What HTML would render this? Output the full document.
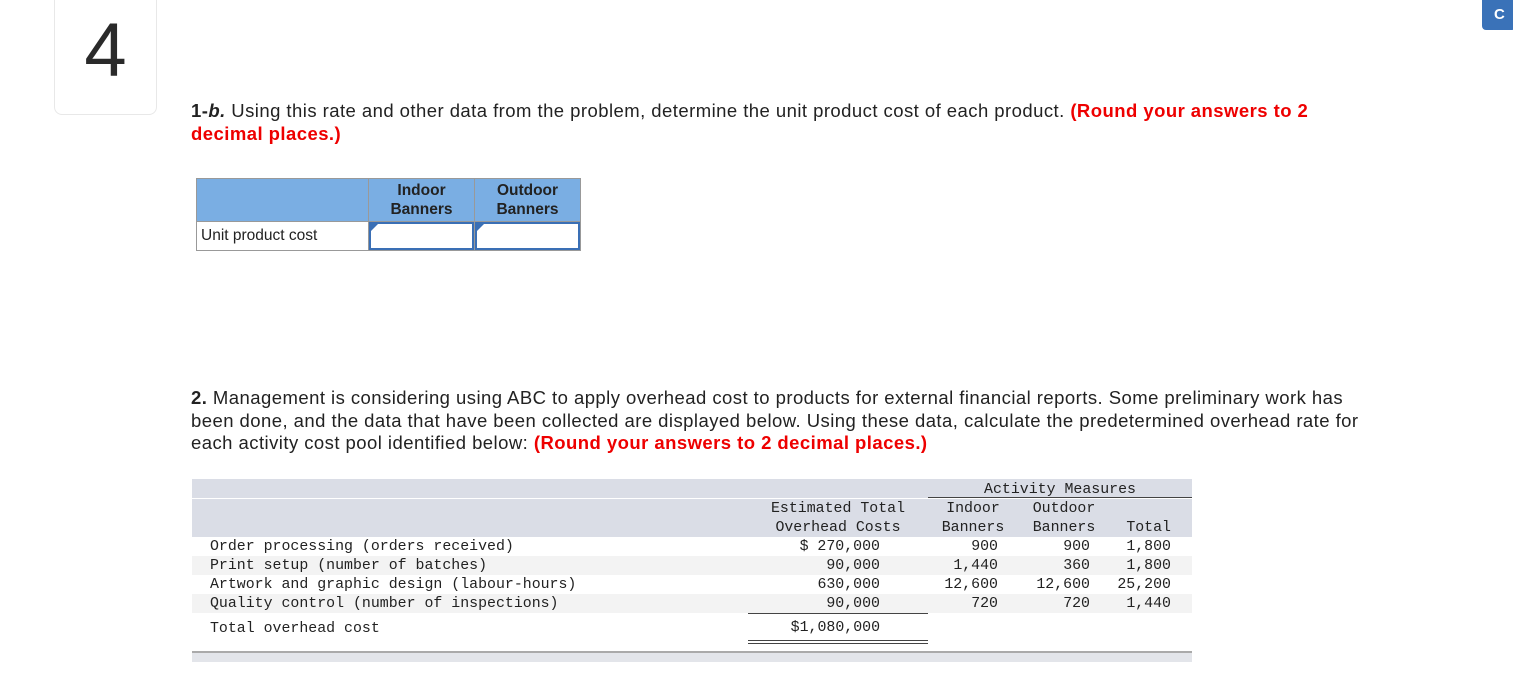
<!DOCTYPE html>
<html><head><meta charset="utf-8"><style>
body{margin:0;width:1513px;height:686px;background:#fff;position:relative;overflow:hidden;font-family:"Liberation Sans",sans-serif;color:#222}
.a{position:absolute}
.num{position:absolute;left:54px;top:-10px;width:101px;height:123px;border:1px solid #e8e8e8;border-radius:8px;background:#fff}
.num span{position:absolute;left:0;width:101px;text-align:center;top:16px;font-size:76px;color:#2a2a2a}
.btn{position:absolute;left:1482px;top:-4px;width:34px;height:34px;background:#3a72b8;border-radius:4px;color:#fff;font-weight:bold;font-size:15px;line-height:38px;padding-left:12px;box-sizing:border-box}
.p{position:absolute;left:191px;font-size:18.5px;line-height:22.5px;color:#222;letter-spacing:0.45px}
.red{color:#e00;font-weight:bold}
table.t1{position:absolute;left:196px;top:178px;border-collapse:collapse;font-size:15.5px}
.t1 td{border:1px solid #999;padding:0}
.t1 .h{background:#7aaee3;font-weight:bold;text-align:center;line-height:19px;height:42px}
.in{position:relative;box-sizing:border-box;border:2px solid #3a6fb5;height:28px;width:100%}
.in:before{content:"";position:absolute;left:0;top:0;border-left:7px solid #3a6fb5;border-bottom:7px solid transparent}
.m{font-family:"Liberation Mono",monospace;font-size:14.9px;color:#222;position:absolute;white-space:pre;line-height:19px}
.band{position:absolute;left:192px;width:1000px}
</style></head><body>
<div class="num"><span>4</span></div>
<div class="btn">C</div>
<div class="p" style="top:100px;width:1130px"><b><i style="font-style:normal">1-</i><i>b.</i></b> Using this rate and other data from the problem, determine the unit product cost of each product. <span class="red">(Round your answers to 2 decimal places.)</span></div>
<table class="t1">
<tr><td class="h" style="width:171px"></td><td class="h" style="width:105px">Indoor<br>Banners</td><td class="h" style="width:105px">Outdoor<br>Banners</td></tr>
<tr><td style="height:27px;padding-left:4px;font-size:15.5px">Unit product cost</td><td><div class="in"></div></td><td><div class="in"></div></td></tr>
</table>
<div class="p" style="top:387px;width:1175px"><b>2.</b> Management is considering using ABC to apply overhead cost to products for external financial reports. Some preliminary work has been done, and the data that have been collected are displayed below. Using these data, calculate the predetermined overhead rate for each activity cost pool identified below: <span class="red">(Round your answers to 2 decimal places.)</span></div>

<div class="band" style="top:479px;height:19px;background:#dadde6"></div>
<div class="band" style="top:499px;height:38px;background:#dadde6"></div>
<div class="band" style="top:556px;height:19px;background:#f3f3f3"></div>
<div class="band" style="top:594px;height:19px;background:#f3f3f3"></div>
<div class="band" style="top:651px;height:9px;background:#e3e5ea;border-top:2px solid #aaa"></div>
<div class="a" style="left:928px;top:497px;width:264px;height:1px;background:#444"></div>
<div class="a" style="left:748px;top:613px;width:180px;height:1px;background:#444"></div>
<div class="a" style="left:748px;top:640px;width:180px;height:1px;background:#444"></div>
<div class="a" style="left:748px;top:643px;width:180px;height:1px;background:#444"></div>

<div class="m" style="left:928px;width:264px;text-align:center;top:481px">Activity Measures</div>
<div class="m" style="left:748px;width:180px;text-align:center;top:500px">Estimated Total
Overhead Costs</div>
<div class="m" style="left:928px;width:90px;text-align:center;top:500px">Indoor
Banners</div>
<div class="m" style="left:1018px;width:92px;text-align:center;top:500px">Outdoor
Banners</div>
<div class="m" style="left:1110px;width:61px;text-align:right;top:519px">Total</div>
<div class="m" style="left:210px;top:538px">Order processing (orders received)
Print setup (number of batches)
Artwork and graphic design (labour-hours)
Quality control (number of inspections)</div>
<div class="m" style="left:210px;top:620px">Total overhead cost</div>
<div class="m" style="left:760px;width:120px;text-align:right;top:538px">$ 270,000
90,000
630,000
90,000</div>
<div class="m" style="left:760px;width:120px;text-align:right;top:619px">$1,080,000</div>
<div class="m" style="left:920px;width:78px;text-align:right;top:538px">900
1,440
12,600
720</div>
<div class="m" style="left:1010px;width:80px;text-align:right;top:538px">900
360
12,600
720</div>
<div class="m" style="left:1090px;width:81px;text-align:right;top:538px">1,800
1,800
25,200
1,440</div>
</body></html>
